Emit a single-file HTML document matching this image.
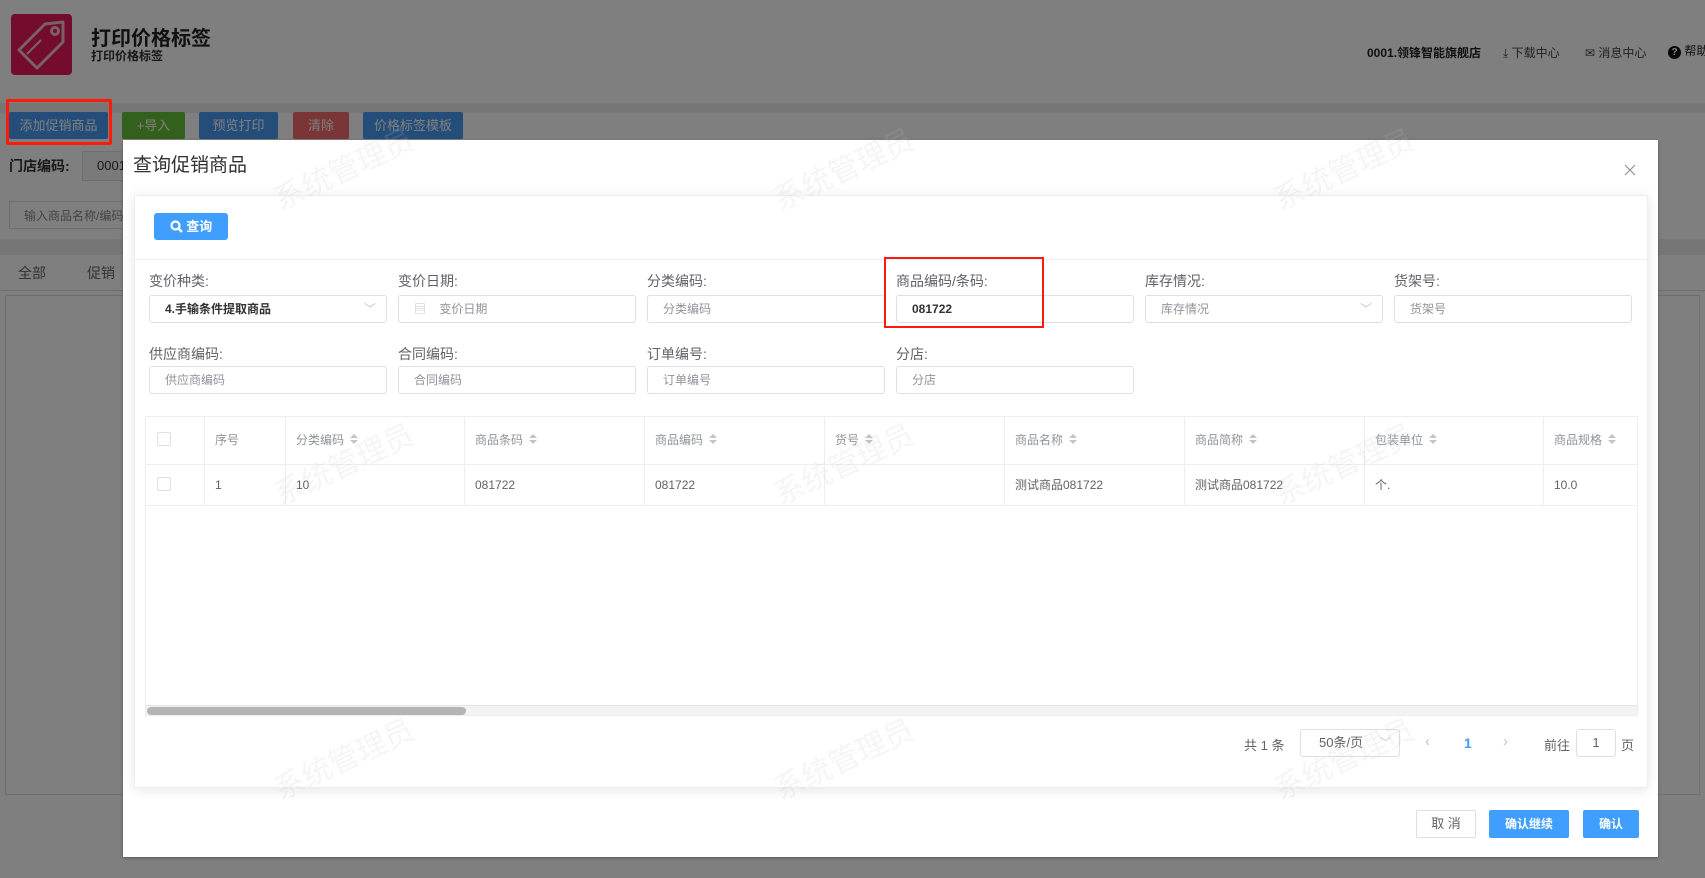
<!DOCTYPE html>
<html><head><meta charset="utf-8"><style>
*{box-sizing:border-box;margin:0;padding:0}
body{width:1705px;height:878px;position:relative;overflow:hidden;background:#fff;font-family:"Liberation Sans","Noto Sans CJK SC",sans-serif;color:#606266;font-size:13px}
.a{position:absolute;white-space:nowrap}
.btn{position:absolute;color:#fff;font-size:13px;text-align:center;border-radius:2px}
.lbl{position:absolute;font-size:14px;color:#606266}
.inp{position:absolute;height:28px;width:238px;border:1px solid #dcdfe6;border-radius:3px;font-size:12px;color:#909399;padding-left:15px;line-height:26px;background:#fff}
.th,.td{position:absolute;font-size:12px;border-right:1px solid #ebeef5;height:100%;padding-left:10px}
.th{color:#909399;line-height:47px}
.td{color:#606266;line-height:41px}
.sort{display:inline-block;width:8px;vertical-align:middle;margin-left:6px;position:relative;top:-2px}
.sort:before{content:"";display:block;border:4px solid transparent;border-bottom:4px solid #c0c4cc;border-top:none;margin-bottom:2px}
.sort:after{content:"";display:block;border:4px solid transparent;border-top:4px solid #c0c4cc;border-bottom:none}
.cb{position:absolute;left:11px;width:14px;height:14px;border:1px solid #dcdfe6;border-radius:2px;background:#fff}
.wm{position:absolute;font-size:30px;color:rgba(190,190,190,0.16);transform:rotate(-25deg);white-space:nowrap;pointer-events:none}
</style></head><body>
<div class="a" style="left:0;top:0;width:1705px;height:103px;background:#fff"></div>
<div class="a" style="left:11px;top:14px;width:61px;height:61px;background:#e6195a;border-radius:4px">
<svg width="61" height="61" viewBox="0 0 61 61"><g fill="none" stroke="#f5c3d0" stroke-width="3"><path d="M8 36 L34 10 L52 8 L52 28 L26 54 Z" stroke-linejoin="round"/><circle cx="44" cy="17" r="3.5"/><path d="M16 40 L30 26" stroke-width="2"/></g></svg></div>
<div class="a" style="left:91px;top:22px;font-size:20px;font-weight:bold;color:#222">打印价格标签</div>
<div class="a" style="left:91px;top:47px;font-size:12px;font-weight:bold;color:#333">打印价格标签</div>
<div class="a" style="left:1367px;top:44px;font-size:12px;font-weight:bold;color:#222">0001.领锋智能旗舰店</div>
<div class="a" style="left:1503px;top:44px;font-size:12px;color:#444">⤓ 下载中心</div>
<div class="a" style="left:1585px;top:44px;font-size:12px;color:#444">✉ 消息中心</div>
<div class="a" style="left:1668px;top:42px;font-size:12px;color:#222"><span style="display:inline-block;width:13px;height:13px;border-radius:50%;background:#111;color:#fff;font-size:10px;text-align:center;line-height:13px;font-weight:bold">?</span> 帮助</div>
<div class="a" style="left:0;top:103px;width:1705px;height:10px;background:#ececec"></div>
<div class="btn" style="left:9px;top:112px;width:99px;height:27px;line-height:27px;background:#4a9bf5">添加促销商品</div>
<div class="btn" style="left:122px;top:112px;width:63px;height:27px;line-height:27px;background:#67c23a">+导入</div>
<div class="btn" style="left:199px;top:112px;width:79px;height:27px;line-height:27px;background:#4a9bf5">预览打印</div>
<div class="btn" style="left:293px;top:112px;width:56px;height:27px;line-height:27px;background:#f56c6c">清除</div>
<div class="btn" style="left:363px;top:112px;width:100px;height:27px;line-height:27px;background:#4a9bf5">价格标签模板</div>
<div class="a" style="left:9px;top:156px;font-size:14px;font-weight:bold;color:#333">门店编码:</div>
<div class="a" style="left:82px;top:151px;width:60px;height:30px;border:1px solid #ddd;background:#f5f5f5;padding:6px 14px;font-size:13px;color:#333">0001</div>
<div class="a" style="left:9px;top:201px;width:200px;height:28px;border:1px solid #ddd;padding:5px 14px;font-size:12px;color:#888">输入商品名称/编码</div>
<div class="a" style="left:0;top:239px;width:1705px;height:16px;background:#ececec"></div>
<div class="a" style="left:18px;top:263px;font-size:14px;color:#666">全部</div>
<div class="a" style="left:87px;top:263px;font-size:14px;color:#666">促销</div>
<div class="a" style="left:0;top:290px;width:1705px;height:1px;background:#ddd"></div>
<div class="a" style="left:5px;top:295px;width:1695px;height:500px;border:1px solid #ddd"></div>
<div class="a" style="left:0;top:0;width:1705px;height:878px;background:rgba(0,0,0,0.5)"></div>
<div class="a" style="left:6px;top:99px;width:106px;height:46px;border:3px solid #ff1a0a;border-radius:2px"></div>
<div class="a" style="left:123px;top:140px;width:1535px;height:717px;background:#fff;box-shadow:0 1px 3px rgba(0,0,0,.3)"></div>
<div class="a" style="left:133px;top:150px;font-size:19px;color:#303133">查询促销商品</div>
<svg class="a" style="left:1624px;top:164px" width="12" height="12" viewBox="0 0 12 12"><path d="M1 1L11 11M11 1L1 11" stroke="#909399" stroke-width="1.2"/></svg>
<div class="a" style="left:134px;top:195px;width:1514px;height:593px;border:1px solid #ebeef5;box-shadow:0 2px 12px rgba(0,0,0,.1);background:#fff"></div>
<div class="btn" style="left:154px;top:213px;width:74px;height:27px;line-height:27px;background:#409eff;border-radius:3px;font-weight:bold"><svg width="13" height="13" viewBox="0 0 13 13" style="vertical-align:-2px"><circle cx="5.5" cy="5.5" r="4" fill="none" stroke="#fff" stroke-width="2.2"/><path d="M8.5 8.5L12 12" stroke="#fff" stroke-width="2.4"/></svg> 查询</div>
<div class="a" style="left:135px;top:259px;width:1512px;height:1px;background:#ebeef5"></div>

<div class="lbl" style="left:149px;top:271px">变价种类:</div>
<div class="lbl" style="left:398px;top:271px">变价日期:</div>
<div class="lbl" style="left:647px;top:271px">分类编码:</div>
<div class="lbl" style="left:896px;top:271px">商品编码/条码:</div>
<div class="lbl" style="left:1145px;top:271px">库存情况:</div>
<div class="lbl" style="left:1394px;top:271px">货架号:</div>
<div class="inp" style="left:149px;top:295px;color:#303133;font-weight:bold">4.手输条件提取商品<span style="position:absolute;right:10px;color:#c0c4cc;font-weight:normal">﹀</span></div>
<div class="inp" style="left:398px;top:295px"><span style="color:#c0c4cc">▤</span>&nbsp;&nbsp;&nbsp;&nbsp;变价日期</div>
<div class="inp" style="left:647px;top:295px">分类编码</div>
<div class="inp" style="left:896px;top:295px;color:#303133;font-weight:bold">081722</div>
<div class="inp" style="left:1145px;top:295px">库存情况<span style="position:absolute;right:10px;color:#c0c4cc">﹀</span></div>
<div class="inp" style="left:1394px;top:295px">货架号</div>
<div class="a" style="left:884px;top:257px;width:160px;height:71px;border:2px solid #ff1a0a"></div>

<div class="lbl" style="left:149px;top:344px">供应商编码:</div>
<div class="lbl" style="left:398px;top:344px">合同编码:</div>
<div class="lbl" style="left:647px;top:344px">订单编号:</div>
<div class="lbl" style="left:896px;top:344px">分店:</div>
<div class="inp" style="left:149px;top:366px">供应商编码</div>
<div class="inp" style="left:398px;top:366px">合同编码</div>
<div class="inp" style="left:647px;top:366px">订单编号</div>
<div class="inp" style="left:896px;top:366px">分店</div>

<div class="a" style="left:145px;top:416px;width:1493px;height:300px;border:1px solid #ebeef5;overflow:hidden">
 <div class="a" style="left:0;top:0;width:1493px;height:48px;border-bottom:1px solid #ebeef5">
  <div class="th" style="left:0;width:59px"><span class="cb" style="top:15px"></span></div>
  <div class="th" style="left:59px;width:81px">序号</div>
  <div class="th" style="left:140px;width:179px">分类编码<span class="sort"></span></div>
  <div class="th" style="left:319px;width:180px">商品条码<span class="sort"></span></div>
  <div class="th" style="left:499px;width:180px">商品编码<span class="sort"></span></div>
  <div class="th" style="left:679px;width:180px">货号<span class="sort"></span></div>
  <div class="th" style="left:859px;width:180px">商品名称<span class="sort"></span></div>
  <div class="th" style="left:1039px;width:180px">商品简称<span class="sort"></span></div>
  <div class="th" style="left:1219px;width:179px">包装单位<span class="sort"></span></div>
  <div class="th" style="left:1398px;width:100px">商品规格<span class="sort"></span></div>
 </div>
 <div class="a" style="left:0;top:48px;width:1493px;height:41px;border-bottom:1px solid #ebeef5">
  <div class="td" style="left:0;width:59px"><span class="cb" style="top:12px"></span></div>
  <div class="td" style="left:59px;width:81px">1</div>
  <div class="td" style="left:140px;width:179px">10</div>
  <div class="td" style="left:319px;width:180px">081722</div>
  <div class="td" style="left:499px;width:180px">081722</div>
  <div class="td" style="left:679px;width:180px"></div>
  <div class="td" style="left:859px;width:180px">测试商品081722</div>
  <div class="td" style="left:1039px;width:180px">测试商品081722</div>
  <div class="td" style="left:1219px;width:179px">个.</div>
  <div class="td" style="left:1398px;width:100px">10.0</div>
 </div>
 <div class="a" style="left:0;top:288px;width:1493px;height:12px;background:#f3f3f3;border-top:1px solid #e4e4e4"></div>
 <div class="a" style="left:1px;top:290px;width:319px;height:8px;background:#b4b4b4;border-radius:4px"></div>
</div>

<div class="a" style="left:1244px;top:735px;font-size:13px;color:#606266">共 1 条</div>
<div class="a" style="left:1300px;top:729px;width:100px;height:28px;border:1px solid #dcdfe6;border-radius:3px;font-size:13px;line-height:26px;padding-left:18px">50条/页<span style="position:absolute;right:8px;top:0;color:#c0c4cc;font-size:11px">﹀</span></div>
<div class="a" style="left:1425px;top:733px;font-size:15px;color:#c0c4cc">‹</div>
<div class="a" style="left:1464px;top:735px;font-size:14px;font-weight:bold;color:#409eff">1</div>
<div class="a" style="left:1503px;top:733px;font-size:15px;color:#c0c4cc">›</div>
<div class="a" style="left:1544px;top:735px;font-size:13px">前往</div>
<div class="a" style="left:1576px;top:729px;width:40px;height:28px;border:1px solid #dcdfe6;border-radius:3px;text-align:center;line-height:26px;font-size:13px">1</div>
<div class="a" style="left:1621px;top:735px;font-size:13px">页</div>

<div class="btn" style="left:1416px;top:810px;width:60px;height:28px;line-height:26px;border:1px solid #dcdfe6;color:#606266;background:#fff">取 消</div>
<div class="btn" style="left:1489px;top:810px;width:80px;height:28px;line-height:28px;background:#409eff;font-weight:bold;font-size:12px">确认继续</div>
<div class="btn" style="left:1583px;top:810px;width:56px;height:28px;line-height:28px;background:#409eff;font-weight:bold;font-size:12px">确认</div>

<div class="wm" style="left:268px;top:145px">系统管理员</div>
<div class="wm" style="left:768px;top:145px">系统管理员</div>
<div class="wm" style="left:1268px;top:145px">系统管理员</div>
<div class="wm" style="left:268px;top:440px">系统管理员</div>
<div class="wm" style="left:768px;top:440px">系统管理员</div>
<div class="wm" style="left:1268px;top:440px">系统管理员</div>
<div class="wm" style="left:268px;top:735px">系统管理员</div>
<div class="wm" style="left:768px;top:735px">系统管理员</div>
<div class="wm" style="left:1268px;top:735px">系统管理员</div>
</body></html>
